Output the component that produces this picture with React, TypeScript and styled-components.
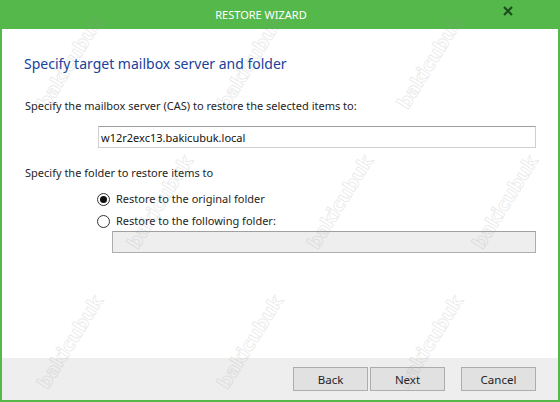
import React from "react";
import styled, { createGlobalStyle } from "styled-components";

const Global = createGlobalStyle`
  html, body { margin: 0; padding: 0; background: #fff; }
  body { font-family: "Noto Sans", "Open Sans", sans-serif; }
`;

const Window = styled.div`
  position: relative;
  width: 560px;
  height: 402px;
  box-sizing: border-box;
  display: flex;
  flex-direction: column;
  background: #55b84b;
  padding: 0 2px 2px 2px;
  overflow: hidden;
`;

const TitleBar = styled.div`
  height: 29px;
  flex: none;
  display: flex;
  align-items: center;
  justify-content: center;
  position: relative;
  color: #fff;
  font-size: 11px;
  padding-right: 38px;
`;

const CloseBtn = styled.div`
  position: absolute;
  right: 44px;
  top: 5px;
  width: 12px;
  height: 12px;
  display: flex;
`;

const Body = styled.div`
  flex: 1;
  background: #fff;
  display: flex;
  flex-direction: column;
  padding: 0 22px;
  color: #1e1e1e;
  font-size: 11px;
`;

const Heading = styled.h1`
  margin: 24px 0 0 0;
  font-weight: 400;
  font-size: 14px;
  line-height: 22px;
  color: #20409a;
`;

const Label = styled.div<{ $mt: number }>`
  margin-top: ${(p) => p.$mt}px;
  line-height: 16px;
  padding-left: 1px;
`;

const Field = styled.div<{ $left: number; $mt: number; $disabled?: boolean }>`
  margin-top: ${(p) => p.$mt}px;
  margin-left: ${(p) => p.$left}px;
  height: 22px;
  box-sizing: border-box;
  border: 1px solid ${(p) => (p.$disabled ? "#adadad" : "#cfcfcf")};
  border-top-color: ${(p) => (p.$disabled ? "#a0a0a0" : "#9e9e9e")};
  background: ${(p) => (p.$disabled ? "#eeeeee" : "#fff")};
  display: flex;
  align-items: center;
  padding-left: 2px;
  color: #111;
`;

const Options = styled.div`
  margin-top: 10px;
  margin-left: 73px;
  display: flex;
  flex-direction: column;
  gap: 6px;
`;

const Option = styled.label`
  display: flex;
  align-items: center;
  gap: 6px;
  line-height: 16px;
`;

const Radio = styled.span<{ $checked?: boolean }>`
  width: 13px;
  height: 13px;
  box-sizing: border-box;
  border-radius: 50%;
  border: 1px solid #333;
  display: flex;
  align-items: center;
  justify-content: center;
  &::after {
    content: "";
    width: 7px;
    height: 7px;
    border-radius: 50%;
    background: ${(p) => (p.$checked ? "#111" : "transparent")};
  }
`;

const Footer = styled.div`
  height: 42px;
  flex: none;
  background: #eeeeee;
  display: flex;
  align-items: center;
  justify-content: flex-end;
  padding-right: 22px;
  box-sizing: border-box;
`;

const Button = styled.button<{ $gap?: number }>`
  width: 75px;
  height: 24px;
  margin-left: ${(p) => p.$gap ?? 0}px;
  box-sizing: border-box;
  border: 1px solid #adadad;
  background: #e1e1e1;
  font-family: inherit;
  font-size: 11.5px;
  color: #1e1e1e;
  padding: 0;
`;

const Watermarks = styled.div`
  position: absolute;
  inset: 0;
  pointer-events: none;
`;

const Mark = styled.span`
  position: absolute;
  font-family: "DejaVu Sans", sans-serif;
  font-weight: 700;
  font-size: 19px;
  line-height: 20px;
  color: rgba(255, 255, 255, 0);
  -webkit-text-stroke: 1px rgba(150, 150, 150, 0.2);
  transform: rotate(-58deg);
  transform-origin: left bottom;
  white-space: nowrap;
  letter-spacing: -0.5px;
`;

const marks = [
  [50, 112],
  [230, 112],
  [410, 112],
  [140, 252],
  [320, 252],
  [485, 252],
  [50, 392],
  [230, 392],
  [410, 392],
];

export default function App() {
  return (
    <>
      <Global />
      <Window>
        <TitleBar>
          RESTORE WIZARD
          <CloseBtn>
            <svg width="12" height="12" viewBox="0 0 12 12">
              <path d="M2 2 L10 10 M10 2 L2 10" stroke="#1c4d1c" strokeWidth="2.2" />
            </svg>
          </CloseBtn>
        </TitleBar>
        <Body>
          <Heading>Specify target mailbox server and folder</Heading>
          <Label $mt={23}>Specify the mailbox server (CAS) to restore the selected items to:</Label>
          <Field $left={74} $mt={12}>w12r2exc13.bakicubuk.local</Field>
          <Label $mt={17}>Specify the folder to restore items to</Label>
          <Options>
            <Option>
              <Radio $checked />
              Restore to the original folder
            </Option>
            <Option>
              <Radio />
              Restore to the following folder:
            </Option>
          </Options>
          <Field $left={88} $mt={2} $disabled />
        </Body>
        <Footer>
          <Button>Back</Button>
          <Button $gap={2}>Next</Button>
          <Button $gap={16}>Cancel</Button>
        </Footer>
        <Watermarks>
          {marks.map(([x, y], i) => (
            <Mark key={i} style={{ left: x, top: y - 20 }}>
              bakicubuk
            </Mark>
          ))}
        </Watermarks>
      </Window>
    </>
  );
}
